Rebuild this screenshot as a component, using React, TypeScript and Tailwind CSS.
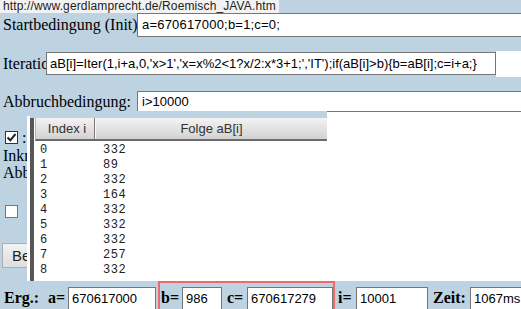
import React from "react";

const inputCls =
  "h-[22px] bg-white border border-[#767676] pl-[3px] text-[13px] leading-[20px] whitespace-nowrap overflow-hidden font-['Liberation_Sans',Arial,sans-serif]";

export default function App() {
  const rows: [string, string][] = [
    ["0", "332"],
    ["1", "89"],
    ["2", "332"],
    ["3", "164"],
    ["4", "332"],
    ["5", "332"],
    ["6", "332"],
    ["7", "257"],
    ["8", "332"],
  ];
  const serif = "font-['Liberation_Serif','Times_New_Roman',serif]";
  const lbl = "shrink-0 h-[22px] leading-[22px] text-[16px] font-bold whitespace-nowrap";
  return (
    <div className="relative w-[521px] h-[309px] overflow-hidden bg-[#bdd3e1] font-['Liberation_Sans',Arial,sans-serif] text-black">
      {/* URL */}
      <div className="h-[13px] flex">
        <div className="h-[13px] bg-[#f2f2f2] px-[3px] text-[12px] tracking-[0.13px] leading-[13px] text-[#222] whitespace-nowrap">
          http://www.gerdlamprecht.de/Roemisch_JAVA.htm
        </div>
      </div>

      {/* Startbedingung */}
      <div className="flex h-[24px] items-center">
        <div className={`w-[137px] shrink-0 pl-[3px] text-[16px] leading-[20px] whitespace-nowrap ${serif}`}>
          Startbedingung (Init)
        </div>
        <div className={`flex-1 mr-[-4px] ${inputCls} h-[24px] leading-[22px] pl-[4px] tracking-[0.2px]`}>
          a=670617000;b=1;c=0;
        </div>
      </div>

      {/* Iteration */}
      <div className="flex h-[23px] items-center mt-[15px]">
        <div className={`w-[46px] shrink-0 overflow-hidden pl-[3px] text-[16px] leading-[20px] whitespace-nowrap ${serif}`}>
          Iteration:
        </div>
        <div className={`w-[450px] shrink-0 ${inputCls} h-[23px] leading-[21px]`}>
          aB[i]=Iter(1,i+a,0,'x&gt;1','x=x%2&lt;1?x/2:x*3+1;','IT');if(aB[i]&gt;b){"{"}b=aB[i];c=i+a;{"}"}
        </div>
        <div className="w-[25px] shrink-0 h-[26px] bg-white self-start mt-[-1px]" />
      </div>

      {/* Abbruch */}
      <div className="flex h-[21px] items-center mt-[16px]">
        <div className={`w-[137px] shrink-0 pl-[3px] text-[16px] leading-[20px] whitespace-nowrap ${serif}`}>
          Abbruchbedingung:
        </div>
        <div className={`flex-1 mr-[-4px] ${inputCls} h-[21px] leading-[19px] pl-[4px]`}>
          i&gt;10000
        </div>
      </div>

      {/* left block under popup */}
      <div className="h-[169px] flex flex-col">
        <div className="flex items-center mt-[19px] ml-[5px] h-[13px]">
          <div className="w-[13px] h-[13px] bg-white border border-[#333] flex items-center justify-center">
            <svg width="11" height="11" viewBox="0 0 11 11">
              <path d="M1.5 5.5 L4.3 8.3 L9.5 2" stroke="#222" strokeWidth="2" fill="none" />
            </svg>
          </div>
          <span className={`ml-[4px] text-[16px] leading-[16px] whitespace-nowrap ${serif}`}>: Ausgabe</span>
        </div>
        <div className={`mt-[3px] pl-[3px] text-[16px] leading-[17px] whitespace-nowrap ${serif}`}>Inkrement:</div>
        <div className={`pl-[3px] text-[16px] leading-[17px] whitespace-nowrap ${serif}`}>Abbruch:</div>
        <div className="flex items-center mt-[24px] ml-[5px] h-[13px]">
          <div className="w-[13px] h-[13px] bg-white border border-[#777]" />
        </div>
        <div className="mt-[25px] ml-[2px] w-[90px] h-[25px] border border-[#adadad] bg-gradient-to-b from-[#f2f2f2] to-[#dedede] pl-[9px] text-[15px] leading-[23px] text-[#222] whitespace-nowrap">
          Berechnen
        </div>
      </div>

      {/* Ergebnis row */}
      <div className={`h-[28px] flex items-start ${serif}`}>
        <div className="w-[4px] shrink-0" />
        <div className={`w-[44px] mt-[6px] ${lbl}`}>Erg.:</div>
        <div className={`w-[20px] mt-[6px] ${lbl}`}>a=</div>
        <div className={`w-[88px] shrink-0 mt-[6px] ${inputCls} h-[23px] leading-[21px]`}>670617000</div>
        <div className="w-[2px] shrink-0" />
        <div className="w-[177px] shrink-0 h-[30px] border-2 border-[#f06868] flex items-start pt-[4px]">
          <div className="w-[1px] shrink-0" />
          <div className={`w-[21px] ${lbl}`}>b=</div>
          <div className={`w-[40px] shrink-0 ${inputCls} h-[23px] leading-[21px]`}>986</div>
          <div className="w-[5px] shrink-0" />
          <div className={`w-[20px] ${lbl}`}>c=</div>
          <div className={`w-[86px] shrink-0 ${inputCls} h-[23px] leading-[21px]`}>670617279</div>
        </div>
        <div className="w-[3px] shrink-0" />
        <div className={`w-[18px] mt-[6px] ${lbl}`}>i=</div>
        <div className={`w-[72px] shrink-0 mt-[6px] ${inputCls} h-[23px] leading-[21px]`}>10001</div>
        <div className="w-[5px] shrink-0" />
        <div className={`w-[37px] mt-[6px] ${lbl}`}>Zeit:</div>
        <div className={`w-[60px] shrink-0 mt-[6px] ${inputCls} h-[23px] leading-[21px]`}>1067ms</div>
      </div>

      {/* popup table window */}
      <div className="absolute left-[27px] top-[111px] right-0 h-[170px] flex">
        <div className="w-[300px] flex flex-col">
          <div className="h-[5px] bg-[#bdd3e1]" />
          <div className="flex-1 flex bg-white">
            <div className="w-[3px]" />
            <div className="flex-1 flex flex-col">
              <div className="h-[2px] bg-[#bdd3e1]" />
              <div className="flex-1 flex">
                <div className="w-[4px] bg-[#575757]" />
                <div className="w-[1px]" />
                <div className="flex-1 flex flex-col">
                  <div className="h-[23px] flex border-b-2 border-[#6b6b6b] border-l border-l-[#b5b5b5] bg-gradient-to-b from-[#f3f3f3] to-[#d3d3d3] text-[13px] text-[#333] font-['Liberation_Sans',Arial,sans-serif]">
                    <div className="w-[58px] flex items-center justify-center pl-[4px] leading-[21px]">Index i</div>
                    <div className="w-[1px] bg-[#7a7a7a]" />
                    <div className="w-[1px] bg-[#f8f8f8]" />
                    <div className="flex-1 flex items-center justify-center leading-[21px]">Folge aB[i]</div>
                  </div>
                  <div className="pt-[2px] font-['Liberation_Mono','Courier_New',monospace] text-[12px] tracking-[0.6px] text-[#222]">
                    {rows.map(([i, v]) => (
                      <div key={i} className="flex h-[15px] leading-[15px]">
                        <div className="w-[68px] pl-[5px]">{i}</div>
                        <div>{v}</div>
                      </div>
                    ))}
                  </div>
                </div>
              </div>
            </div>
          </div>
        </div>
        <div className="flex-1 bg-white border-t border-[#767676]" />
      </div>
    </div>
  );
}
